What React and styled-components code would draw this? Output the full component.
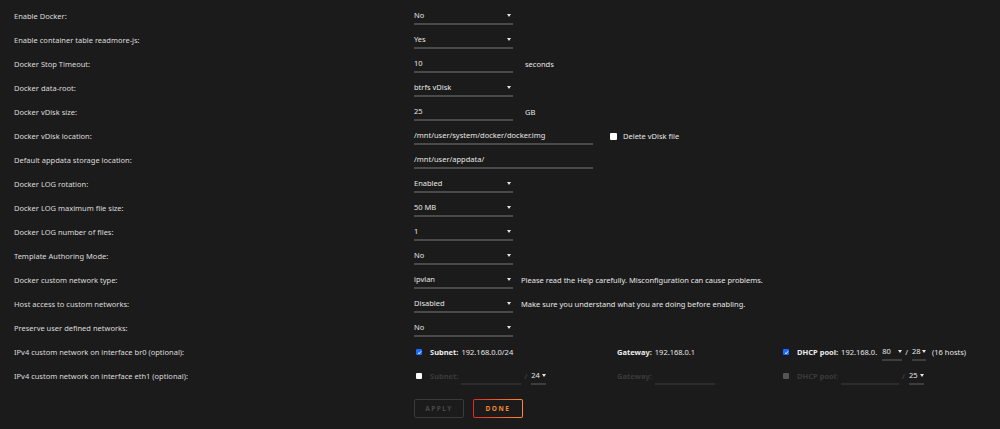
import React from "react";
import styled, { createGlobalStyle } from "styled-components";

const rows = [
  { label: "Enable Docker:", type: "select", value: "No" },
  { label: "Enable container table readmore-js:", type: "select", value: "Yes" },
  { label: "Docker Stop Timeout:", type: "input", value: "10", unit: "seconds" },
  { label: "Docker data-root:", type: "select", value: "btrfs vDisk" },
  { label: "Docker vDisk size:", type: "input", value: "25", unit: "GB" },
  {
    label: "Docker vDisk location:",
    type: "input",
    wide: true,
    value: "/mnt/user/system/docker/docker.img",
    check: "Delete vDisk file",
  },
  { label: "Default appdata storage location:", type: "input", wide: true, value: "/mnt/user/appdata/" },
  { label: "Docker LOG rotation:", type: "select", value: "Enabled" },
  { label: "Docker LOG maximum file size:", type: "select", value: "50 MB" },
  { label: "Docker LOG number of files:", type: "select", value: "1" },
  { label: "Template Authoring Mode:", type: "select", value: "No" },
  {
    label: "Docker custom network type:",
    type: "select",
    value: "ipvlan",
    note: "Please read the Help carefully. Misconfiguration can cause problems.",
  },
  {
    label: "Host access to custom networks:",
    type: "select",
    value: "Disabled",
    note: "Make sure you understand what you are doing before enabling.",
  },
  { label: "Preserve user defined networks:", type: "select", value: "No" },
];

function App() {
  return (
    <>
      <GlobalStyle />
      <Page>
        {rows.map((row, idx) => (
          <Row key={idx}>
            <Label>{row.label}</Label>
            <Field>
              {row.type === "select" ? (
                <Select>
                  <span>{row.value}</span>
                  <Arrow />
                </Select>
              ) : (
                <TextInput $wide={row.wide}>{row.value}</TextInput>
              )}
              {row.unit && <Unit>{row.unit}</Unit>}
              {row.note && <Note>{row.note}</Note>}
              {row.check && (
                <CheckLabel>
                  <Box $big />
                  {row.check}
                </CheckLabel>
              )}
            </Field>
          </Row>
        ))}

        <Row>
          <Label>IPv4 custom network on interface br0 (optional):</Label>
          <NetField>
            <Group>
              <Box $checked>
                <Tick />
              </Box>
              <Key>Subnet:</Key>
              <Val>192.168.0.0/24</Val>
            </Group>
            <Group>
              <Key>Gateway:</Key>
              <Val>192.168.0.1</Val>
            </Group>
            <Group>
              <Box $checked>
                <Tick />
              </Box>
              <Key>DHCP pool:</Key>
              <Val $gap={5}>192.168.0.</Val>
              <MiniSelect $width={20}>
                <span>80</span>
                <Arrow />
              </MiniSelect>
              <Slash>/</Slash>
              <MiniSelect $width={14}>
                <span>28</span>
                <Arrow />
              </MiniSelect>
              <Hosts>(16 hosts)</Hosts>
            </Group>
          </NetField>
        </Row>

        <Row>
          <Label>IPv4 custom network on interface eth1 (optional):</Label>
          <NetField>
            <Group>
              <Box />
              <Key $dim>Subnet:</Key>
              <BlankInput $width={60} />
              <Slash $dim>/</Slash>
              <MiniSelect $width={15}>
                <span>24</span>
                <Arrow />
              </MiniSelect>
            </Group>
            <Group>
              <Key $dim>Gateway:</Key>
              <BlankInput $width={60} />
            </Group>
            <Group>
              <Box $disabled />
              <Key $dim>DHCP pool:</Key>
              <BlankInput $width={58} />
              <Slash $dim>/</Slash>
              <MiniSelect $width={15}>
                <span>25</span>
                <Arrow />
              </MiniSelect>
            </Group>
          </NetField>
        </Row>

        <Actions>
          <Button disabled>APPLY</Button>
          <Button $primary>DONE</Button>
        </Actions>
      </Page>
    </>
  );
}

const GlobalStyle = createGlobalStyle`
  html, body {
    margin: 0;
    background: #1c1b1b;
    font-family: "Noto Sans", "Open Sans", sans-serif;
    font-size: 7.5px;
    color: #e6e6e6;
  }
`;

const Page = styled.div`
  padding: 4px 0 0 14px;
`;

const Row = styled.div`
  display: grid;
  grid-template-columns: 400px 1fr;
  height: 24px;
  align-items: center;
`;

const Label = styled.div`
  color: #dcdcdc;
`;

const Field = styled.div`
  display: flex;
  align-items: center;
  height: 24px;
`;

const Select = styled.div`
  box-sizing: border-box;
  width: 99px;
  height: 18px;
  display: flex;
  align-items: center;
  justify-content: space-between;
  padding-right: 2px;
  border-bottom: 2px solid #4a4a4a;
`;

const Arrow = styled.i`
  width: 0;
  height: 0;
  border-left: 2px solid transparent;
  border-right: 2px solid transparent;
  border-top: 3px solid #e6e6e6;
  margin-top: 1px;
`;

const TextInput = styled.div`
  box-sizing: border-box;
  width: ${(p) => (p.$wide ? "179px" : "99px")};
  height: 18px;
  display: flex;
  align-items: center;
  border-bottom: 2px solid #4a4a4a;
`;

const Unit = styled.span`
  margin-left: 12px;
`;

const Note = styled.span`
  margin-left: 8px;
`;

const CheckLabel = styled.label`
  display: flex;
  align-items: center;
  margin-left: 17px;
  gap: 6px;
`;

const Box = styled.span`
  box-sizing: border-box;
  display: inline-flex;
  align-items: center;
  justify-content: center;
  width: ${(p) => (p.$big ? "7px" : "6px")};
  height: ${(p) => (p.$big ? "7px" : "6px")};
  flex: none;
  border-radius: 1px;
  background: ${(p) => (p.$checked ? "#1a6bff" : p.$disabled ? "#555" : "#fff")};
`;

const Tick = () => (
  <svg width="5" height="5" viewBox="0 0 10 10">
    <path d="M2 5.5 L4.2 7.6 L8.2 2.6" stroke="#fff" strokeWidth="1.8" fill="none" />
  </svg>
);

const NetField = styled.div`
  display: grid;
  grid-template-columns: 201px 166px auto;
  align-items: center;
  height: 24px;
  padding-left: 2px;
`;

const Group = styled.div`
  display: flex;
  align-items: center;
  height: 24px;
  ${Box} {
    margin-right: 8px;
  }
`;

const Key = styled.span`
  font-weight: 700;
  margin-right: 3px;
  color: ${(p) => (p.$dim ? "#3a3a3a" : "#ececec")};
`;

const Val = styled.span`
  margin-right: ${(p) => p.$gap || 3}px;
`;

const Hosts = styled.span`
  margin-left: 6px;
`;

const MiniSelect = styled.div`
  box-sizing: border-box;
  width: ${(p) => p.$width}px;
  height: 18px;
  display: flex;
  align-items: center;
  justify-content: space-between;
  border-bottom: 2px solid #3d3d3d;
`;

const BlankInput = styled.div`
  box-sizing: border-box;
  width: ${(p) => p.$width}px;
  height: 18px;
  border-bottom: 2px solid #2c2c2c;
`;

const Slash = styled.span`
  margin: 0 4px 0 3px;
  color: ${(p) => (p.$dim ? "#4a4a4a" : "#e6e6e6")};
`;

const Actions = styled.div`
  display: flex;
  gap: 9px;
  padding: 11px 0 0 400px;
`;

const Button = styled.button`
  width: 50px;
  height: 19px;
  padding: 0;
  font-family: inherit;
  font-size: 6.5px;
  font-weight: 700;
  letter-spacing: 1.5px;
  border-radius: 2px;
  background: transparent;
  color: ${(p) => (p.$primary ? "#f0892f" : "#484848")};
  border: 1px solid ${(p) => (p.$primary ? "transparent" : "#3a3a3a")};
  ${(p) =>
    p.$primary &&
    `
    background: linear-gradient(#1c1b1b, #1c1b1b) padding-box,
      linear-gradient(90deg, #e22828, #ff8c2f) border-box;
  `}
`;

export default App;
